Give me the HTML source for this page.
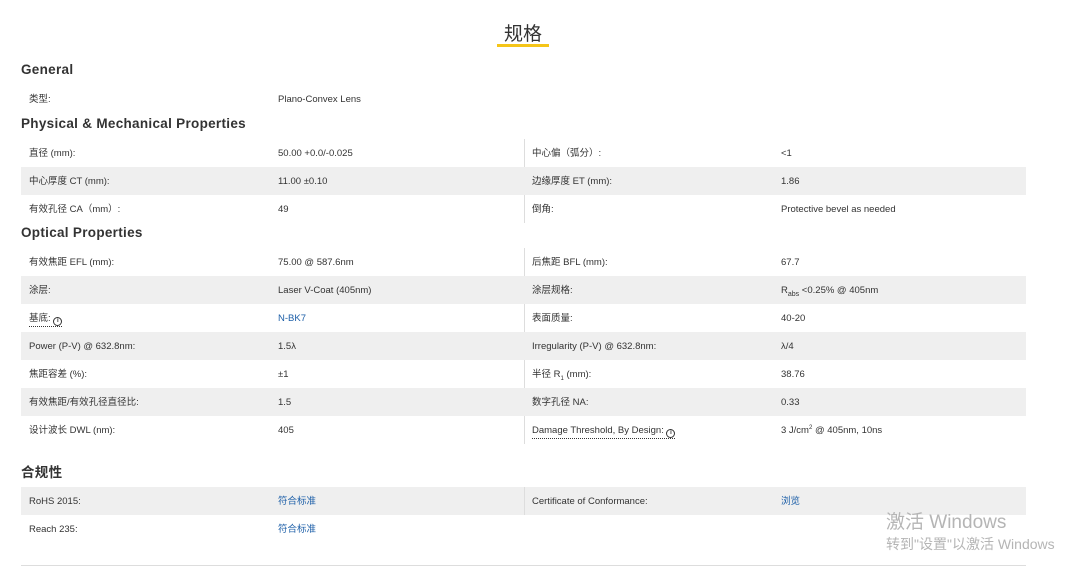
<!DOCTYPE html>
<html><head><meta charset="utf-8"><style>
*{margin:0;padding:0;box-sizing:border-box}
body{width:1065px;height:574px;background:#fff;position:relative;overflow:hidden;font-family:"Liberation Sans","Noto Sans CJK SC",sans-serif;color:#333;font-size:9.5px}
.a{position:absolute;white-space:nowrap}
.h{position:absolute;left:21px;font-size:13.5px;font-weight:bold;color:#333;letter-spacing:0.3px;line-height:16px}
.row{position:absolute;left:21px;width:1005px;height:28px}
.g{background:#efefef}
.row span{position:absolute;top:1px;height:28px;line-height:28px;white-space:nowrap}
.l1{left:8px}.v1{left:257px}.l2{left:511px}.v2{left:760px}
.vd{position:absolute;left:524px;width:1px;background:#ddd}
.lk{color:#1d5fa8}
.u b{font-weight:normal;border-bottom:1px dotted #333;line-height:12px;display:inline-block}
.i{display:inline-block;width:9px;height:9px;border:1.3px solid #333;border-radius:50%;font-size:6px;line-height:6px;text-align:center;font-weight:bold;vertical-align:-1px;font-style:normal}
sub,sup{line-height:0}
</style></head><body>
<div class="a" style="left:504px;top:19px;font-size:19px;color:#333">规格</div>
<div class="a" style="left:497px;top:44px;width:52px;height:3px;background:#f5c518"></div>

<div class="h" style="top:62px">General</div>
<div class="row" style="top:85px"><span class="l1">类型:</span><span class="v1">Plano-Convex Lens</span></div>

<div class="h" style="top:116px">Physical &amp; Mechanical Properties</div>
<div class="vd" style="top:139px;height:84px"></div>
<div class="row" style="top:139px"><span class="l1">直径 (mm):</span><span class="v1">50.00 +0.0/-0.025</span><span class="l2">中心偏（弧分）:</span><span class="v2">&lt;1</span></div>
<div class="row g" style="top:167px"><span class="l1">中心厚度 CT (mm):</span><span class="v1">11.00 ±0.10</span><span class="l2">边缘厚度 ET (mm):</span><span class="v2">1.86</span></div>
<div class="row" style="top:195px"><span class="l1">有效孔径 CA（mm）:</span><span class="v1">49</span><span class="l2">倒角:</span><span class="v2">Protective bevel as needed</span></div>

<div class="h" style="top:225px">Optical Properties</div>
<div class="vd" style="top:248px;height:196px"></div>
<div class="row" style="top:248px"><span class="l1">有效焦距 EFL (mm):</span><span class="v1">75.00 @ 587.6nm</span><span class="l2">后焦距 BFL (mm):</span><span class="v2">67.7</span></div>
<div class="row g" style="top:276px"><span class="l1">涂层:</span><span class="v1">Laser V-Coat (405nm)</span><span class="l2">涂层规格:</span><span class="v2">R<sub style="font-size:7px">abs</sub> &lt;0.25% @ 405nm</span></div>
<div class="row" style="top:304px"><span class="l1 u"><b>基底: <i class="i">i</i></b></span><span class="v1 lk">N-BK7</span><span class="l2">表面质量:</span><span class="v2">40-20</span></div>
<div class="row g" style="top:332px"><span class="l1">Power (P-V) @ 632.8nm:</span><span class="v1">1.5λ</span><span class="l2">Irregularity (P-V) @ 632.8nm:</span><span class="v2">λ/4</span></div>
<div class="row" style="top:360px"><span class="l1">焦距容差 (%):</span><span class="v1">±1</span><span class="l2">半径 R<sub style="font-size:6px">1</sub> (mm):</span><span class="v2">38.76</span></div>
<div class="row g" style="top:388px"><span class="l1">有效焦距/有效孔径直径比:</span><span class="v1">1.5</span><span class="l2">数字孔径 NA:</span><span class="v2">0.33</span></div>
<div class="row" style="top:416px"><span class="l1">设计波长 DWL (nm):</span><span class="v1">405</span><span class="l2 u"><b>Damage Threshold, By Design: <i class="i">i</i></b></span><span class="v2">3 J/cm<sup style="font-size:6px">2</sup> @ 405nm, 10ns</span></div>

<div class="h" style="top:465px">合规性</div>
<div class="row g" style="top:487px"><span class="l1">RoHS 2015:</span><span class="v1 lk">符合标准</span><span class="l2">Certificate of Conformance:</span><span class="v2 lk">浏览</span></div>
<div class="vd" style="top:487px;height:28px"></div>
<div class="row" style="top:515px"><span class="l1">Reach 235:</span><span class="v1 lk">符合标准</span></div>
<div class="a" style="left:21px;top:565px;width:1005px;height:1px;background:#ddd"></div>

<div class="a" style="left:886px;top:507px;font-size:19px;color:#b5b5b5">激活 Windows</div>
<div class="a" style="left:886px;top:534px;font-size:14px;color:#b5b5b5">转到"设置"以激活 Windows</div>
</body></html>
